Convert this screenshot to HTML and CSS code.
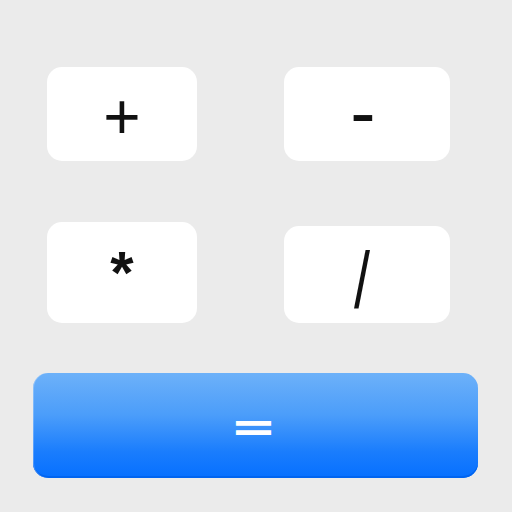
FILE: index.html
```html
<!DOCTYPE html>
<html>
<head>
<meta charset="utf-8">
<link rel="stylesheet" href="styles.css">
</head>
<body>
<div class="calc">
  <div class="ops">
    <button class="key key-r1 key-plus">+</button>
    <button class="key key-r1 key-minus">-</button>
    <button class="key key-mul">*</button>
    <button class="key key-div"><span class="slash">/</span></button>
  </div>
  <button class="equals"><span class="eq">=</span></button>
</div>
</body>
</html>
```
FILE: styles.css
```css
html, body {
  margin: 0;
  padding: 0;
  background: #ebebeb;
  width: 512px;
  height: 512px;
  overflow: hidden;
}
.calc {
  padding: 67px 0 0 33px;
  display: flex;
  flex-direction: column;
}
.ops {
  display: grid;
  grid-template-columns: 150px 166px;
  grid-template-rows: 94px 101px;
  column-gap: 87px;
  row-gap: 61px;
  margin-left: 14px;
}
.key {
  border: none;
  background: #ffffff;
  border-radius: 15px;
  font-family: "Liberation Sans", Arial, sans-serif;
  font-size: 70px;
  color: #111111;
  padding: 0;
  margin: 0;
  display: flex;
  align-items: center;
  justify-content: center;
  line-height: 1;
}
.key-r1 { height: 94px; }
.key-plus { font-size: 64px; padding-top: 5px; }
.key-minus { font-size: 76px; padding: 0 8px 4px 0; }
.key-mul { height: 101px; padding: 0; font-weight: bold; font-size: 60px; }
.key-div { height: 97px; align-self: end; padding: 12px 10px 0 0; font-size: 80px; }
.slash {
  display: inline-block;
  transform: scaleX(0.72);
}
.equals {
  margin-top: 50px;
  width: 445px;
  height: 105px;
  border: none;
  border-radius: 15px;
  background: linear-gradient(180deg, #6db1f9 0%, #4b9dfa 40%, #1a7dfd 75%, #0670ff 100%);
  box-shadow: inset 1px 0 0 rgba(255,255,255,0.25), inset 0 -2px 0 #0064f0;
  color: #ffffff;
  font-family: "DejaVu Sans", sans-serif;
  font-weight: bold;
  font-size: 56px;
  padding: 2px 4px 0 0;
  line-height: 1;
}
.eq {
  display: inline-block;
  transform: scaleY(0.72);
}
```
